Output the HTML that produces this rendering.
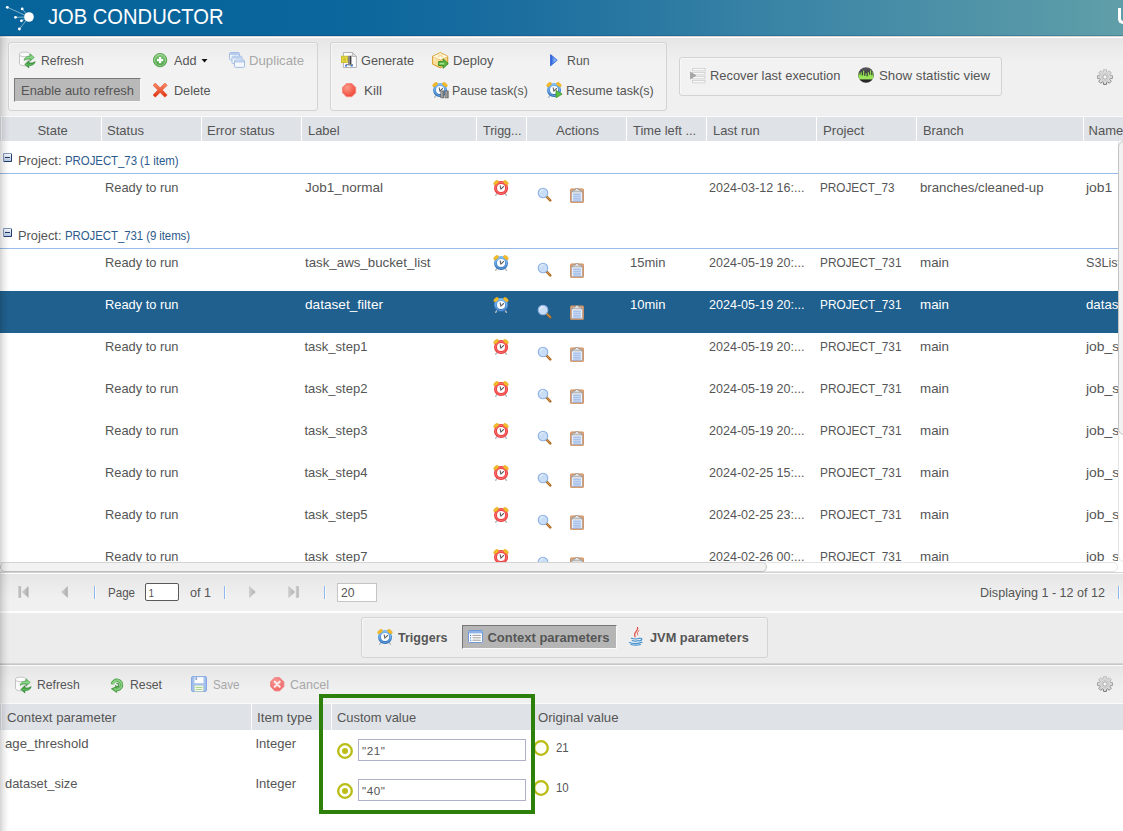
<!DOCTYPE html>
<html>
<head>
<meta charset="utf-8">
<title>Job Conductor</title>
<style>
html,body{margin:0;padding:0;}
body{width:1123px;height:831px;overflow:hidden;position:relative;background:#efefef;font-family:"Liberation Sans",sans-serif;font-size:13px;color:#555;}
.abs{position:absolute;}
.t{position:absolute;white-space:nowrap;line-height:16px;transform-origin:0 50%;}
#hdr{left:0;top:0;width:1123px;height:36px;background:linear-gradient(90deg,#06649b 0%,#0a669c 30%,#1a6d9f 45%,#3d86a6 72%,#609fa9 100%);}
.grp{position:absolute;border:1px solid #d3d3d3;border-radius:3px;box-sizing:border-box;background:rgba(255,255,255,0.15);box-shadow:inset 1px 1px 0 rgba(255,255,255,0.55);}
.hd{position:absolute;height:24px;background:#dfe2e7;box-sizing:border-box;border-left:1px solid #fff;}
.blue{color:#2c5a8c;}
.w{color:#fff;}
.g{color:#a8a8a8;}
.b{font-weight:bold;}
input{font-family:"Liberation Sans",sans-serif;}
</style>
</head>
<body>
<div id="hdr" class="abs">
<svg class="abs" style="left:0;top:0" width="44" height="36" viewBox="0 0 44 36">
<g stroke="#cfe0ec" stroke-width="0.6" fill="none"><line x1="7.3" y1="7.3" x2="29" y2="17"/><line x1="22.2" y1="8.9" x2="29" y2="17"/><line x1="15.500" y1="17.300" x2="29" y2="17"/><line x1="21.400" y1="20.800" x2="29" y2="17"/><line x1="19.400" y1="29" x2="29" y2="17"/></g>
<g fill="#fff"><circle cx="29" cy="17" r="4.800"/><circle cx="7.300" cy="7.300" r="1.400"/><circle cx="22.200" cy="8.900" r="1.400"/><circle cx="15.500" cy="17.300" r="1.400"/><circle cx="21.400" cy="20.800" r="1.400"/><circle cx="19.400" cy="29" r="1.400"/></g></svg>
<div class="t" style="left:47.5px;top:4px;font-size:22.5px;line-height:26px;color:#fff;transform:scaleX(0.8961);">JOB CONDUCTOR</div>
<div class="abs" style="left:1118.300px;top:8px;width:14px;height:16px;box-sizing:border-box;border-left:3px solid #fff;border-bottom:3.200px solid #fff;border-bottom-left-radius:5px"></div>
<div class="abs" style="left:0;top:35px;width:1123px;height:1px;background:rgba(0,40,100,0.2)"></div>
</div>
<div class="abs" style="left:0;top:38px;width:1123px;height:78px;background:linear-gradient(#e6e6e6,#f0f0f0 24px)"></div>
<div class="abs" style="left:0;top:36px;width:1123px;height:1px;background:#d9d7d5"></div>
<div class="abs" style="left:0;top:37px;width:1123px;height:1px;background:#fff"></div>
<div class="grp" style="left:8px;top:42px;width:310px;height:69px"></div>
<div class="grp" style="left:330px;top:42px;width:337px;height:69px"></div>
<div class="grp" style="left:679px;top:57px;width:323px;height:39px"></div>
<div class="abs" style="left:14px;top:78px;width:126.500px;height:23.500px;box-sizing:border-box;background:#b9b9b9;border:1px solid #7a7a7a;border-right-color:#f6f6f6;border-bottom-color:#f6f6f6"></div>
<svg class="abs" style="left:19px;top:51px" width="17" height="18" viewBox="0 0 17 18"><defs><linearGradient id="cy19051" x1="0" x2="1"><stop offset="0" stop-color="#ffffff"/><stop offset="0.5" stop-color="#f4f4f4"/><stop offset="1" stop-color="#cfcfcf"/></linearGradient><linearGradient id="ga19051" x1="0" y1="0" x2="0" y2="1"><stop offset="0" stop-color="#4cad4c"/><stop offset="0.5" stop-color="#8fd88f"/><stop offset="1" stop-color="#3f9f3f"/></linearGradient><linearGradient id="gb19051" x1="0" y1="0" x2="0" y2="1"><stop offset="0" stop-color="#1f7d1f"/><stop offset="0.55" stop-color="#5cb85c"/><stop offset="1" stop-color="#1f7a1f"/></linearGradient></defs><path d="M.5 3.400v9c0 1.400 2.300 2.400 5.200 2.400s5.200-1 5.200-2.400v-9z" fill="url(#cy19051)" stroke="#bdbdbd" stroke-width="0.900"/><ellipse cx="5.700" cy="3.400" rx="5.200" ry="2.300" fill="#fcfcfc" stroke="#bdbdbd" stroke-width="0.900"/><path d="M5 9.400C5.400 6.600 8 5.100 11 5.100V2.800l4.400 3.600L11 10V7.900c-2.200 0-4.200.3-6 1.500z" fill="url(#ga19051)" stroke="#3f9a3f" stroke-width="0.500" stroke-linejoin="round"/><path d="M16.200 10.500c-.5 2.900-3 4.200-6.300 4.200V17l-4.200-3.600 4.200-3.600v2.200c2.400 0 4.700-.2 6.300-1.500z" fill="url(#gb19051)" stroke="#2a7f2a" stroke-width="0.500" stroke-linejoin="round"/></svg>
<div class="t" style="left:41px;top:53px;transform:scaleX(0.9378);">Refresh</div>
<div class="t" style="left:21px;top:83px;transform:scaleX(0.9959);">Enable auto refresh</div>
<svg class="abs" style="left:152.9px;top:52.9px" width="15" height="15" viewBox="0 0 15 15"><defs><linearGradient id="adg" x1="0" y1="0" x2="0" y2="1"><stop offset="0" stop-color="#86cc7c"/><stop offset="1" stop-color="#459c3e"/></linearGradient></defs><circle cx="7.100" cy="7.100" r="6.700" fill="url(#adg)" stroke="#4a9a42" stroke-width="0.800"/><circle cx="7.100" cy="7.100" r="5.500" fill="none" stroke="#c5e8bf" stroke-width="0.600"/><path d="M7.100 4v6.200M4 7.100h6.200" stroke="#fff" stroke-width="2.300"/></svg>
<div class="t" style="left:173.5px;top:53px;transform:scaleX(0.9723);">Add</div>
<svg class="abs" style="left:201px;top:58px" width="8" height="6" viewBox="0 0 8 6"><path d="M.5 1h6l-3 3.500z" fill="#111"/></svg>
<svg class="abs" style="left:152.9px;top:82.8px" width="15" height="15" viewBox="0 0 15 15"><defs><linearGradient id="dlg" x1="0" y1="0" x2="0" y2="1"><stop offset="0" stop-color="#fb8d6c"/><stop offset="1" stop-color="#df2f0e"/></linearGradient></defs><path d="M2.300 0L7.100 4.800 11.900 0l2.300 2.300L9.400 7.100l4.800 4.800-2.300 2.300L7.100 9.400 2.300 14.200 0 11.900 4.800 7.100 0 2.300z" fill="url(#dlg)" stroke="#e2431f" stroke-width="0.500" stroke-linejoin="round"/></svg>
<div class="t" style="left:173.5px;top:83px;transform:scaleX(0.9713);">Delete</div>
<svg class="abs" style="left:229px;top:52px" width="17" height="17" viewBox="0 0 17 17"><rect x="0.5" y="0.5" width="10" height="7.400" rx="1" fill="#f5f8fd" stroke="#a3bce3" stroke-width="1"/><rect x="1.0" y="1.0" width="9" height="2" fill="#b9cdee"/><rect x="3" y="4.2" width="10" height="7.400" rx="1" fill="#f5f8fd" stroke="#a3bce3" stroke-width="1"/><rect x="3.5" y="4.7" width="9" height="2" fill="#b9cdee"/><rect x="5.5" y="8" width="10" height="7.400" rx="1" fill="#f5f8fd" stroke="#a3bce3" stroke-width="1"/><rect x="6.0" y="8.5" width="9" height="2" fill="#b9cdee"/></svg>
<div class="t g" style="left:249px;top:53px;transform:scaleX(1.0147);">Duplicate</div>
<svg class="abs" style="left:341px;top:52px" width="17" height="16" viewBox="0 0 17 16"><path d="M2.400 .5h9l4 4v11h-13z" fill="#fcfcfc" stroke="#adadad" stroke-width="0.900"/><path d="M11.400 .5v4h4z" fill="#e4e4e4" stroke="#adadad" stroke-width="0.800" stroke-linejoin="round"/><rect x="7" y="3.800" width="3.200" height="9.600" fill="#8a8a8a"/><rect x="9.100" y="3.800" width="1.200" height="9.600" fill="#3a3a3a"/><rect x="4.600" y="12" width="7.400" height="1.100" fill="#8a8a8a"/><rect x="4" y="13" width="2" height="1.600" fill="#3f7fe8"/><rect x="9.800" y="13" width="2" height="1.600" fill="#3f7fe8"/><rect x="0.400" y="4.200" width="6" height="6.300" fill="#ece04a" stroke="#c2b21e" stroke-width="0.800"/><path d="M1.800 6h3.300M1.800 7.400h3.300M1.800 8.800h3.300" stroke="#bdae22" stroke-width="0.700"/></svg>
<div class="t" style="left:361px;top:53px;transform:scaleX(0.9778);">Generate</div>
<svg class="abs" style="left:341.9px;top:82.9px" width="15" height="15" viewBox="0 0 15 15"><defs><radialGradient id="kg" cx="0.350" cy="0.300" r="0.850"><stop offset="0" stop-color="#fc9a88"/><stop offset="1" stop-color="#ee3a2c"/></radialGradient></defs><path d="M4.400 .5h5.400l3.900 3.900v5.400l-3.900 3.900h-5.400l-3.900-3.900v-5.400z" fill="url(#kg)" stroke="#f58878" stroke-width="0.900"/></svg>
<div class="t" style="left:364px;top:83px;transform:scaleX(1.0378);">Kill</div>
<svg class="abs" style="left:431.5px;top:51.5px" width="17" height="17" viewBox="0 0 17 17"><defs><linearGradient id="dpl" x1="0" y1="0" x2="1" y2="1"><stop offset="0" stop-color="#fff0c4"/><stop offset="1" stop-color="#f7c767"/></linearGradient></defs><path d="M8.300 .6l7.400 3.700v7.800l-7.400 3.800-7.700-3.800v-7.800z" fill="url(#dpl)" stroke="#d69d2e" stroke-width="1" stroke-linejoin="round"/><path d="M.8 4.400l7.500 3.500 7.300-3.500M8.300 7.900v7.800" fill="none" stroke="#dfa940" stroke-width="0.800"/><path d="M8.300 .9l-7.300 3.500 7.300 3.400 7.200-3.400z" fill="#fff6dc"/><path d="M5.600 2.200l5.400 2.800M11 2.200l-5.400 2.800" stroke="#ecc46e" stroke-width="0.600"/><path d="M6.600 9.600h4.600v-2.700l5 4.700-5 4.700v-2.700h-4.600z" fill="#5db548" stroke="#2c8a1c" stroke-width="0.900" stroke-linejoin="round"/><path d="M7.500 11.600h4.600" fill="none" stroke="#a6e090" stroke-width="1.600"/></svg>
<div class="t" style="left:453.4px;top:53px;transform:scaleX(1.0032);">Deploy</div>
<svg class="abs" style="left:431.5px;top:81.5px" width="17" height="17" viewBox="0 0 17 17"><defs><linearGradient id="blr" x1="0" y1="0" x2="0" y2="1"><stop offset="0" stop-color="#72b4f0"/><stop offset="0.5" stop-color="#4a90d8"/><stop offset="1" stop-color="#2d6db6"/></linearGradient></defs><g stroke="#b4bcc0" stroke-width="1.500" stroke-linecap="round"><line x1="3.800" y1="13.600" x2="2.700" y2="15.300"/></g><circle cx="8.050" cy="8" r="5.550" fill="#fff" stroke="url(#blr)" stroke-width="3"/><circle cx="8.050" cy="8" r="5.500" fill="none" stroke="#9cc6f2" stroke-width="0.700" opacity="0.800"/><g fill="#f3bb2a" stroke="#e2a514" stroke-width="0.400"><ellipse cx="3.100" cy="2.600" rx="2.800" ry="1.600" transform="rotate(-40 3.100 2.600)"/><ellipse cx="12.900" cy="2.600" rx="2.800" ry="1.600" transform="rotate(40 12.900 2.600)"/></g><path d="M7.200 5.800L7.800 9.200 10.600 6.500" fill="none" stroke="#5e5e5e" stroke-width="1.050" stroke-linecap="round" stroke-linejoin="round"/><defs><linearGradient id="pbg" x1="0" x2="1"><stop offset="0" stop-color="#b8b8b8"/><stop offset="1" stop-color="#7a7a7a"/></linearGradient></defs><rect x="8.800" y="8.900" width="3.100" height="7" fill="url(#pbg)" stroke="#585858" stroke-width="0.600"/><rect x="13.100" y="8.900" width="3.100" height="7" fill="url(#pbg)" stroke="#585858" stroke-width="0.600"/></svg>
<div class="t" style="left:452px;top:83px;transform:scaleX(0.9536);">Pause task(s)</div>
<svg class="abs" style="left:549.5px;top:53.5px" width="8" height="13" viewBox="0 0 8 13"><defs><linearGradient id="rg" x1="0" x2="1"><stop offset="0" stop-color="#2252d8"/><stop offset="0.6" stop-color="#7fb0f2"/><stop offset="1" stop-color="#a9cdf8"/></linearGradient></defs><path d="M.6 .6l6.600 5.600-6.600 5.600z" fill="url(#rg)" stroke="#2356d8" stroke-width="0.8" stroke-linejoin="round"/></svg>
<div class="t" style="left:567px;top:53px;transform:scaleX(0.9472);">Run</div>
<svg class="abs" style="left:545.5px;top:81.5px" width="17" height="17" viewBox="0 0 17 17"><defs><linearGradient id="blr" x1="0" y1="0" x2="0" y2="1"><stop offset="0" stop-color="#72b4f0"/><stop offset="0.5" stop-color="#4a90d8"/><stop offset="1" stop-color="#2d6db6"/></linearGradient></defs><g stroke="#b4bcc0" stroke-width="1.500" stroke-linecap="round"><line x1="3.800" y1="13.600" x2="2.700" y2="15.300"/></g><circle cx="8.050" cy="8" r="5.550" fill="#fff" stroke="url(#blr)" stroke-width="3"/><circle cx="8.050" cy="8" r="5.500" fill="none" stroke="#9cc6f2" stroke-width="0.700" opacity="0.800"/><g fill="#f3bb2a" stroke="#e2a514" stroke-width="0.400"><ellipse cx="3.100" cy="2.600" rx="2.800" ry="1.600" transform="rotate(-40 3.100 2.600)"/><ellipse cx="12.900" cy="2.600" rx="2.800" ry="1.600" transform="rotate(40 12.900 2.600)"/></g><path d="M7.200 5.800L7.800 9.200 10.600 6.500" fill="none" stroke="#5e5e5e" stroke-width="1.050" stroke-linecap="round" stroke-linejoin="round"/><path d="M10 8.400l6.200 3.700-6.200 3.700z" fill="#5cbf45" stroke="#3d962d" stroke-width="0.8" stroke-linejoin="round"/></svg>
<div class="t" style="left:566px;top:83px;transform:scaleX(0.9645);">Resume task(s)</div>
<svg class="abs" style="left:690px;top:68px" width="16" height="16" viewBox="0 0 16 16"><rect x="2.600" y="0.4" width="12.400" height="2.400" fill="#fafafa" stroke="#cdcdcd" stroke-width="0.8"/><rect x="2.600" y="4.4" width="12.400" height="2.400" fill="#fafafa" stroke="#cdcdcd" stroke-width="0.8"/><rect x="2.600" y="8.4" width="12.400" height="2.400" fill="#fafafa" stroke="#cdcdcd" stroke-width="0.8"/><rect x="2.600" y="12.4" width="12.400" height="2.400" fill="#fafafa" stroke="#cdcdcd" stroke-width="0.8"/><path d="M.3 4l5.600 3.500-5.600 3.500z" fill="#a6a6a6" stroke="#8e8e8e" stroke-width="0.5"/></svg>
<div class="t" style="left:710px;top:68px;transform:scaleX(0.9915);">Recover last execution</div>
<svg class="abs" style="left:858px;top:67px" width="16" height="16" viewBox="0 0 16 16"><defs><clipPath id="sc"><circle cx="8" cy="8" r="7.600"/></clipPath><linearGradient id="sg" x1="0" y1="0" x2="0" y2="1"><stop offset="0" stop-color="#5a5a5e"/><stop offset="0.500" stop-color="#38383c"/><stop offset="1" stop-color="#222"/></linearGradient></defs><circle cx="8" cy="8" r="7.800" fill="url(#sg)"/><g clip-path="url(#sc)"><path d="M0 12.200V5.600h1.400v2h1.200v-2.400h1.200v3h1.200v-4.400h1.200v5h1.200v-2.600h1.200v3.600h1.200v-4.600h1.200v2.400h1v-4.400h1.200v4.800h1.200v-3h1.400v7.200z" fill="#8edb4e"/><rect x="0" y="9.400" width="16" height="2.800" fill="#9be45a"/></g></svg>
<div class="t" style="left:878.5px;top:68px;transform:scaleX(1.0175);">Show statistic view</div>
<svg class="abs" style="left:1097px;top:69px" width="16" height="16" viewBox="0 0 16 16"><defs><linearGradient id="grs" x1="0" y1="0" x2="0" y2="1"><stop offset="0" stop-color="#c2c2c2"/><stop offset="1" stop-color="#6e6e6e"/></linearGradient></defs><path d="M6.37 2.75L6.56 0.54L9.44 0.54L9.63 2.75L10.57 3.14L12.26 1.71L14.29 3.74L12.86 5.43L13.25 6.37L15.46 6.56L15.46 9.44L13.25 9.63L12.86 10.57L14.29 12.26L12.26 14.29L10.57 12.86L9.63 13.25L9.44 15.46L6.56 15.46L6.37 13.25L5.43 12.86L3.74 14.29L1.71 12.26L3.14 10.57L2.75 9.63L0.54 9.44L0.54 6.56L2.75 6.37L3.14 5.43L1.71 3.74L3.74 1.71L5.43 3.14z" fill="#d9d9d9" stroke="url(#grs)" stroke-width="0.900" stroke-linejoin="round"/><circle cx="8" cy="8" r="3.600" fill="none" stroke="#c4c4c4" stroke-width="0.700"/><circle cx="8" cy="8" r="2.100" fill="#f7f7f7" stroke="#a2a2a2" stroke-width="0.800"/></svg>
<div class="abs" style="left:0;top:116px;width:1123px;height:1px;background:#fafafa"></div>
<div class="abs" style="left:0;top:117px;width:2px;height:24px;background:#dfe2e7"></div>
<div class="hd" style="left:1px;top:117px;width:100px"></div>
<div class="t" style="left:37.4px;top:122.5px;">State</div>
<div class="hd" style="left:101px;top:117px;width:100px"></div>
<div class="t" style="left:107px;top:122.5px;transform:scaleX(1.0038);">Status</div>
<div class="hd" style="left:201px;top:117px;width:100px"></div>
<div class="t" style="left:207px;top:122.5px;transform:scaleX(1.0047);">Error status</div>
<div class="hd" style="left:301px;top:117px;width:175px"></div>
<div class="t" style="left:307.5px;top:122.5px;transform:scaleX(0.9902);">Label</div>
<div class="hd" style="left:476px;top:117px;width:50px"></div>
<div class="t" style="left:482.5px;top:122.5px;transform:scaleX(0.9629);">Trigg...</div>
<div class="hd" style="left:526px;top:117px;width:100px"></div>
<div class="t" style="left:556px;top:122.5px;transform:scaleX(1.0084);">Actions</div>
<div class="hd" style="left:626px;top:117px;width:80px"></div>
<div class="t" style="left:632.8px;top:122.5px;transform:scaleX(0.9904);">Time left ...</div>
<div class="hd" style="left:706px;top:117px;width:110px"></div>
<div class="t" style="left:713px;top:122.5px;transform:scaleX(0.9939);">Last run</div>
<div class="hd" style="left:816px;top:117px;width:100px"></div>
<div class="t" style="left:822.8px;top:122.5px;transform:scaleX(1.0156);">Project</div>
<div class="hd" style="left:916px;top:117px;width:167px"></div>
<div class="t" style="left:923px;top:122.5px;transform:scaleX(0.9878);">Branch</div>
<div class="hd" style="left:1083px;top:117px;width:60px"></div>
<div class="t" style="left:1088.6px;top:122.5px;">Name</div>
<div class="abs" style="left:0;top:141px;width:1123px;height:421px;background:#fff"></div>
<div class="abs" style="left:3px;top:153px;width:9px;height:9px;box-sizing:border-box;border:1px solid #1f3d6e;border-top-color:#7f96bd;border-left-color:#7f96bd;background:linear-gradient(#f6f8fc,#b7c7e1);border-radius:1.500px"></div>
<div class="abs" style="left:5px;top:157px;width:5px;height:1px;background:#1d3a6b"></div>
<div class="t" style="left:17.5px;top:153px;transform:scaleX(0.9869);">Project:</div>
<div class="t blue" style="left:65px;top:153px;letter-spacing:-0.056px;transform:scaleX(0.8800);">PROJECT_73 (1 item)</div>
<div class="abs" style="left:0;top:173px;width:1118px;height:1px;background:#99bbe8"></div>
<div class="abs" style="left:3px;top:228px;width:9px;height:9px;box-sizing:border-box;border:1px solid #1f3d6e;border-top-color:#7f96bd;border-left-color:#7f96bd;background:linear-gradient(#f6f8fc,#b7c7e1);border-radius:1.500px"></div>
<div class="abs" style="left:5px;top:232px;width:5px;height:1px;background:#1d3a6b"></div>
<div class="t" style="left:17.5px;top:228px;transform:scaleX(0.9869);">Project:</div>
<div class="t blue" style="left:65px;top:228px;letter-spacing:-0.082px;transform:scaleX(0.8800);">PROJECT_731 (9 items)</div>
<div class="abs" style="left:0;top:248px;width:1118px;height:1px;background:#99bbe8"></div>
<div class="abs" style="left:0;top:141px;width:1118px;height:421px;overflow:hidden">
<div class="t" style="left:105px;top:39px;transform:scaleX(0.9874);">Ready to run</div>
<div class="t" style="left:304.5px;top:39px;transform:scaleX(1.0378);">Job1_normal</div>
<svg class="abs" style="left:493px;top:39px" width="16" height="17" viewBox="0 0 16 17"><g stroke="#b4bcc0" stroke-width="1.500" stroke-linecap="round"><line x1="3.800" y1="13.600" x2="2.700" y2="15.300"/><line x1="12.300" y1="13.600" x2="13.400" y2="15.300"/></g><circle cx="8.050" cy="8" r="5.550" fill="#fff" stroke="#f03a3a" stroke-width="3"/><circle cx="8.050" cy="8" r="5.500" fill="none" stroke="#f8a6a6" stroke-width="0.700" opacity="0.800"/><g fill="#f3bb2a" stroke="#e2a514" stroke-width="0.400"><ellipse cx="3.100" cy="2.600" rx="2.800" ry="1.600" transform="rotate(-40 3.100 2.600)"/><ellipse cx="12.900" cy="2.600" rx="2.800" ry="1.600" transform="rotate(40 12.900 2.600)"/></g><path d="M7.200 5.800L7.800 9.200 10.600 6.500" fill="none" stroke="#5e5e5e" stroke-width="1.050" stroke-linecap="round" stroke-linejoin="round"/></svg>
<svg class="abs" style="left:537.4px;top:45.6px" width="16" height="16" viewBox="0 0 16 16"><line x1="9.400" y1="9.400" x2="13.300" y2="13.300" stroke="#a8651c" stroke-width="2.500" stroke-linecap="round"/><line x1="9.800" y1="9.600" x2="13.200" y2="13" stroke="#e6b06a" stroke-width="0.900" stroke-linecap="round"/><circle cx="6" cy="6" r="4.800" fill="#c9def6" stroke="#8db1e2" stroke-width="1.100"/><path d="M3 5.400a3.200 3.200 0 0 1 3.200-2.800" fill="none" stroke="#eef5fd" stroke-width="1"/></svg>
<svg class="abs" style="left:570px;top:47px" width="14" height="15" viewBox="0 0 14 15"><rect x="0.500" y="0.900" width="13" height="13.700" rx="0.800" fill="#e3a877" stroke="#d08f5c" stroke-width="0.900"/><rect x="1.900" y="3" width="10.200" height="10.400" fill="#fff" stroke="#6b96d6" stroke-width="0.500"/><g stroke="#4d80d2" stroke-width="0.800"><line x1="3.100" y1="6.100" x2="10.900" y2="6.100"/><line x1="3.100" y1="8.100" x2="10.900" y2="8.100"/><line x1="3.100" y1="10.100" x2="10.900" y2="10.100"/><line x1="3.100" y1="12" x2="10.900" y2="12"/></g><path d="M2 3.900c0-1.500 1.600-1.900 3.200-1.900l.5-1.300h2.600l.5 1.300c1.600 0 3.200.4 3.200 1.900z" fill="#dcdcdc" stroke="#8c8c8c" stroke-width="0.700"/><circle cx="7" cy="1.500" r="0.600" fill="#fff"/></svg>
<div class="t" style="left:709px;top:39px;transform:scaleX(0.9643);">2024-03-12 16:...</div>
<div class="t" style="left:819.5px;top:39px;transform:scaleX(0.9044);">PROJECT_73</div>
<div class="t" style="left:919.5px;top:39px;transform:scaleX(1.0171);">branches/cleaned-up</div>
<div class="t" style="left:1086px;top:39px;transform:scaleX(1.07);">job1</div>
<div class="t" style="left:105px;top:114px;transform:scaleX(0.9874);">Ready to run</div>
<div class="t" style="left:304.5px;top:114px;transform:scaleX(1.0216);">task_aws_bucket_list</div>
<svg class="abs" style="left:493px;top:114px" width="16" height="17" viewBox="0 0 16 17"><defs><linearGradient id="blr" x1="0" y1="0" x2="0" y2="1"><stop offset="0" stop-color="#72b4f0"/><stop offset="0.5" stop-color="#4a90d8"/><stop offset="1" stop-color="#2d6db6"/></linearGradient></defs><g stroke="#b4bcc0" stroke-width="1.500" stroke-linecap="round"><line x1="3.800" y1="13.600" x2="2.700" y2="15.300"/><line x1="12.300" y1="13.600" x2="13.400" y2="15.300"/></g><circle cx="8.050" cy="8" r="5.550" fill="#fff" stroke="url(#blr)" stroke-width="3"/><circle cx="8.050" cy="8" r="5.500" fill="none" stroke="#9cc6f2" stroke-width="0.700" opacity="0.800"/><g fill="#f3bb2a" stroke="#e2a514" stroke-width="0.400"><ellipse cx="3.100" cy="2.600" rx="2.800" ry="1.600" transform="rotate(-40 3.100 2.600)"/><ellipse cx="12.900" cy="2.600" rx="2.800" ry="1.600" transform="rotate(40 12.900 2.600)"/></g><path d="M7.200 5.800L7.800 9.200 10.600 6.500" fill="none" stroke="#5e5e5e" stroke-width="1.050" stroke-linecap="round" stroke-linejoin="round"/></svg>
<svg class="abs" style="left:537.4px;top:120.6px" width="16" height="16" viewBox="0 0 16 16"><line x1="9.400" y1="9.400" x2="13.300" y2="13.300" stroke="#a8651c" stroke-width="2.500" stroke-linecap="round"/><line x1="9.800" y1="9.600" x2="13.200" y2="13" stroke="#e6b06a" stroke-width="0.900" stroke-linecap="round"/><circle cx="6" cy="6" r="4.800" fill="#c9def6" stroke="#8db1e2" stroke-width="1.100"/><path d="M3 5.400a3.200 3.200 0 0 1 3.200-2.800" fill="none" stroke="#eef5fd" stroke-width="1"/></svg>
<svg class="abs" style="left:570px;top:122px" width="14" height="15" viewBox="0 0 14 15"><rect x="0.500" y="0.900" width="13" height="13.700" rx="0.800" fill="#e3a877" stroke="#d08f5c" stroke-width="0.900"/><rect x="1.900" y="3" width="10.200" height="10.400" fill="#fff" stroke="#6b96d6" stroke-width="0.500"/><g stroke="#4d80d2" stroke-width="0.800"><line x1="3.100" y1="6.100" x2="10.900" y2="6.100"/><line x1="3.100" y1="8.100" x2="10.900" y2="8.100"/><line x1="3.100" y1="10.100" x2="10.900" y2="10.100"/><line x1="3.100" y1="12" x2="10.900" y2="12"/></g><path d="M2 3.900c0-1.500 1.600-1.900 3.200-1.900l.5-1.300h2.600l.5 1.300c1.600 0 3.200.4 3.200 1.900z" fill="#dcdcdc" stroke="#8c8c8c" stroke-width="0.700"/><circle cx="7" cy="1.500" r="0.600" fill="#fff"/></svg>
<div class="t" style="left:630px;top:114px;">15min</div>
<div class="t" style="left:709px;top:114px;transform:scaleX(0.9643);">2024-05-19 20:...</div>
<div class="t" style="left:819.5px;top:114px;transform:scaleX(0.9097);">PROJECT_731</div>
<div class="t" style="left:919.5px;top:114px;transform:scaleX(1.0288);">main</div>
<div class="t" style="left:1086px;top:114px;transform:scaleX(0.97);">S3List</div>
<div class="abs" style="left:0;top:150px;width:1118px;height:42px;background:#20608f"></div>
<div class="t w" style="left:105px;top:156px;transform:scaleX(0.9874);">Ready to run</div>
<div class="t w" style="left:304.5px;top:156px;transform:scaleX(1.0479);">dataset_filter</div>
<svg class="abs" style="left:493px;top:156px" width="16" height="17" viewBox="0 0 16 17"><defs><linearGradient id="blr" x1="0" y1="0" x2="0" y2="1"><stop offset="0" stop-color="#72b4f0"/><stop offset="0.5" stop-color="#4a90d8"/><stop offset="1" stop-color="#2d6db6"/></linearGradient></defs><g stroke="#b4bcc0" stroke-width="1.500" stroke-linecap="round"><line x1="3.800" y1="13.600" x2="2.700" y2="15.300"/><line x1="12.300" y1="13.600" x2="13.400" y2="15.300"/></g><circle cx="8.050" cy="8" r="5.550" fill="#fff" stroke="url(#blr)" stroke-width="3"/><circle cx="8.050" cy="8" r="5.500" fill="none" stroke="#9cc6f2" stroke-width="0.700" opacity="0.800"/><g fill="#f3bb2a" stroke="#e2a514" stroke-width="0.400"><ellipse cx="3.100" cy="2.600" rx="2.800" ry="1.600" transform="rotate(-40 3.100 2.600)"/><ellipse cx="12.900" cy="2.600" rx="2.800" ry="1.600" transform="rotate(40 12.900 2.600)"/></g><path d="M7.200 5.800L7.800 9.200 10.600 6.500" fill="none" stroke="#5e5e5e" stroke-width="1.050" stroke-linecap="round" stroke-linejoin="round"/></svg>
<svg class="abs" style="left:537.4px;top:162.6px" width="16" height="16" viewBox="0 0 16 16"><line x1="9.400" y1="9.400" x2="13.300" y2="13.300" stroke="#a8651c" stroke-width="2.500" stroke-linecap="round"/><line x1="9.800" y1="9.600" x2="13.200" y2="13" stroke="#e6b06a" stroke-width="0.900" stroke-linecap="round"/><circle cx="6" cy="6" r="4.800" fill="#c9def6" stroke="#8db1e2" stroke-width="1.100"/><path d="M3 5.400a3.200 3.200 0 0 1 3.200-2.800" fill="none" stroke="#eef5fd" stroke-width="1"/></svg>
<svg class="abs" style="left:570px;top:164px" width="14" height="15" viewBox="0 0 14 15"><rect x="0.500" y="0.900" width="13" height="13.700" rx="0.800" fill="#e3a877" stroke="#d08f5c" stroke-width="0.900"/><rect x="1.900" y="3" width="10.200" height="10.400" fill="#fff" stroke="#6b96d6" stroke-width="0.500"/><g stroke="#4d80d2" stroke-width="0.800"><line x1="3.100" y1="6.100" x2="10.900" y2="6.100"/><line x1="3.100" y1="8.100" x2="10.900" y2="8.100"/><line x1="3.100" y1="10.100" x2="10.900" y2="10.100"/><line x1="3.100" y1="12" x2="10.900" y2="12"/></g><path d="M2 3.900c0-1.500 1.600-1.900 3.200-1.900l.5-1.300h2.600l.5 1.300c1.600 0 3.200.4 3.200 1.900z" fill="#dcdcdc" stroke="#8c8c8c" stroke-width="0.700"/><circle cx="7" cy="1.500" r="0.600" fill="#fff"/></svg>
<div class="t w" style="left:630px;top:156px;">10min</div>
<div class="t w" style="left:709px;top:156px;transform:scaleX(0.9643);">2024-05-19 20:...</div>
<div class="t w" style="left:819.5px;top:156px;transform:scaleX(0.9097);">PROJECT_731</div>
<div class="t w" style="left:919.5px;top:156px;transform:scaleX(1.0288);">main</div>
<div class="t w" style="left:1086px;top:156px;transform:scaleX(1.02);">dataset_</div>
<div class="t" style="left:105px;top:198px;transform:scaleX(0.9874);">Ready to run</div>
<div class="t" style="left:304.5px;top:198px;">task_step1</div>
<svg class="abs" style="left:493px;top:198px" width="16" height="17" viewBox="0 0 16 17"><g stroke="#b4bcc0" stroke-width="1.500" stroke-linecap="round"><line x1="3.800" y1="13.600" x2="2.700" y2="15.300"/><line x1="12.300" y1="13.600" x2="13.400" y2="15.300"/></g><circle cx="8.050" cy="8" r="5.550" fill="#fff" stroke="#f03a3a" stroke-width="3"/><circle cx="8.050" cy="8" r="5.500" fill="none" stroke="#f8a6a6" stroke-width="0.700" opacity="0.800"/><g fill="#f3bb2a" stroke="#e2a514" stroke-width="0.400"><ellipse cx="3.100" cy="2.600" rx="2.800" ry="1.600" transform="rotate(-40 3.100 2.600)"/><ellipse cx="12.900" cy="2.600" rx="2.800" ry="1.600" transform="rotate(40 12.900 2.600)"/></g><path d="M7.200 5.800L7.800 9.200 10.600 6.500" fill="none" stroke="#5e5e5e" stroke-width="1.050" stroke-linecap="round" stroke-linejoin="round"/></svg>
<svg class="abs" style="left:537.4px;top:204.6px" width="16" height="16" viewBox="0 0 16 16"><line x1="9.400" y1="9.400" x2="13.300" y2="13.300" stroke="#a8651c" stroke-width="2.500" stroke-linecap="round"/><line x1="9.800" y1="9.600" x2="13.200" y2="13" stroke="#e6b06a" stroke-width="0.900" stroke-linecap="round"/><circle cx="6" cy="6" r="4.800" fill="#c9def6" stroke="#8db1e2" stroke-width="1.100"/><path d="M3 5.400a3.200 3.200 0 0 1 3.200-2.800" fill="none" stroke="#eef5fd" stroke-width="1"/></svg>
<svg class="abs" style="left:570px;top:206px" width="14" height="15" viewBox="0 0 14 15"><rect x="0.500" y="0.900" width="13" height="13.700" rx="0.800" fill="#e3a877" stroke="#d08f5c" stroke-width="0.900"/><rect x="1.900" y="3" width="10.200" height="10.400" fill="#fff" stroke="#6b96d6" stroke-width="0.500"/><g stroke="#4d80d2" stroke-width="0.800"><line x1="3.100" y1="6.100" x2="10.900" y2="6.100"/><line x1="3.100" y1="8.100" x2="10.900" y2="8.100"/><line x1="3.100" y1="10.100" x2="10.900" y2="10.100"/><line x1="3.100" y1="12" x2="10.900" y2="12"/></g><path d="M2 3.900c0-1.500 1.600-1.900 3.200-1.900l.5-1.300h2.600l.5 1.300c1.600 0 3.200.4 3.200 1.900z" fill="#dcdcdc" stroke="#8c8c8c" stroke-width="0.700"/><circle cx="7" cy="1.500" r="0.600" fill="#fff"/></svg>
<div class="t" style="left:709px;top:198px;transform:scaleX(0.9643);">2024-05-19 20:...</div>
<div class="t" style="left:819.5px;top:198px;transform:scaleX(0.9097);">PROJECT_731</div>
<div class="t" style="left:919.5px;top:198px;transform:scaleX(1.0288);">main</div>
<div class="t" style="left:1086px;top:198px;transform:scaleX(1.07);">job_step1</div>
<div class="t" style="left:105px;top:240px;transform:scaleX(0.9874);">Ready to run</div>
<div class="t" style="left:304.5px;top:240px;">task_step2</div>
<svg class="abs" style="left:493px;top:240px" width="16" height="17" viewBox="0 0 16 17"><g stroke="#b4bcc0" stroke-width="1.500" stroke-linecap="round"><line x1="3.800" y1="13.600" x2="2.700" y2="15.300"/><line x1="12.300" y1="13.600" x2="13.400" y2="15.300"/></g><circle cx="8.050" cy="8" r="5.550" fill="#fff" stroke="#f03a3a" stroke-width="3"/><circle cx="8.050" cy="8" r="5.500" fill="none" stroke="#f8a6a6" stroke-width="0.700" opacity="0.800"/><g fill="#f3bb2a" stroke="#e2a514" stroke-width="0.400"><ellipse cx="3.100" cy="2.600" rx="2.800" ry="1.600" transform="rotate(-40 3.100 2.600)"/><ellipse cx="12.900" cy="2.600" rx="2.800" ry="1.600" transform="rotate(40 12.900 2.600)"/></g><path d="M7.200 5.800L7.800 9.200 10.600 6.500" fill="none" stroke="#5e5e5e" stroke-width="1.050" stroke-linecap="round" stroke-linejoin="round"/></svg>
<svg class="abs" style="left:537.4px;top:246.6px" width="16" height="16" viewBox="0 0 16 16"><line x1="9.400" y1="9.400" x2="13.300" y2="13.300" stroke="#a8651c" stroke-width="2.500" stroke-linecap="round"/><line x1="9.800" y1="9.600" x2="13.200" y2="13" stroke="#e6b06a" stroke-width="0.900" stroke-linecap="round"/><circle cx="6" cy="6" r="4.800" fill="#c9def6" stroke="#8db1e2" stroke-width="1.100"/><path d="M3 5.400a3.200 3.200 0 0 1 3.200-2.800" fill="none" stroke="#eef5fd" stroke-width="1"/></svg>
<svg class="abs" style="left:570px;top:248px" width="14" height="15" viewBox="0 0 14 15"><rect x="0.500" y="0.900" width="13" height="13.700" rx="0.800" fill="#e3a877" stroke="#d08f5c" stroke-width="0.900"/><rect x="1.900" y="3" width="10.200" height="10.400" fill="#fff" stroke="#6b96d6" stroke-width="0.500"/><g stroke="#4d80d2" stroke-width="0.800"><line x1="3.100" y1="6.100" x2="10.900" y2="6.100"/><line x1="3.100" y1="8.100" x2="10.900" y2="8.100"/><line x1="3.100" y1="10.100" x2="10.900" y2="10.100"/><line x1="3.100" y1="12" x2="10.900" y2="12"/></g><path d="M2 3.900c0-1.500 1.600-1.900 3.200-1.900l.5-1.300h2.600l.5 1.300c1.600 0 3.200.4 3.200 1.900z" fill="#dcdcdc" stroke="#8c8c8c" stroke-width="0.700"/><circle cx="7" cy="1.500" r="0.600" fill="#fff"/></svg>
<div class="t" style="left:709px;top:240px;transform:scaleX(0.9643);">2024-05-19 20:...</div>
<div class="t" style="left:819.5px;top:240px;transform:scaleX(0.9097);">PROJECT_731</div>
<div class="t" style="left:919.5px;top:240px;transform:scaleX(1.0288);">main</div>
<div class="t" style="left:1086px;top:240px;transform:scaleX(1.07);">job_step2</div>
<div class="t" style="left:105px;top:282px;transform:scaleX(0.9874);">Ready to run</div>
<div class="t" style="left:304.5px;top:282px;">task_step3</div>
<svg class="abs" style="left:493px;top:282px" width="16" height="17" viewBox="0 0 16 17"><g stroke="#b4bcc0" stroke-width="1.500" stroke-linecap="round"><line x1="3.800" y1="13.600" x2="2.700" y2="15.300"/><line x1="12.300" y1="13.600" x2="13.400" y2="15.300"/></g><circle cx="8.050" cy="8" r="5.550" fill="#fff" stroke="#f03a3a" stroke-width="3"/><circle cx="8.050" cy="8" r="5.500" fill="none" stroke="#f8a6a6" stroke-width="0.700" opacity="0.800"/><g fill="#f3bb2a" stroke="#e2a514" stroke-width="0.400"><ellipse cx="3.100" cy="2.600" rx="2.800" ry="1.600" transform="rotate(-40 3.100 2.600)"/><ellipse cx="12.900" cy="2.600" rx="2.800" ry="1.600" transform="rotate(40 12.900 2.600)"/></g><path d="M7.200 5.800L7.800 9.200 10.600 6.500" fill="none" stroke="#5e5e5e" stroke-width="1.050" stroke-linecap="round" stroke-linejoin="round"/></svg>
<svg class="abs" style="left:537.4px;top:288.6px" width="16" height="16" viewBox="0 0 16 16"><line x1="9.400" y1="9.400" x2="13.300" y2="13.300" stroke="#a8651c" stroke-width="2.500" stroke-linecap="round"/><line x1="9.800" y1="9.600" x2="13.200" y2="13" stroke="#e6b06a" stroke-width="0.900" stroke-linecap="round"/><circle cx="6" cy="6" r="4.800" fill="#c9def6" stroke="#8db1e2" stroke-width="1.100"/><path d="M3 5.400a3.200 3.200 0 0 1 3.200-2.800" fill="none" stroke="#eef5fd" stroke-width="1"/></svg>
<svg class="abs" style="left:570px;top:290px" width="14" height="15" viewBox="0 0 14 15"><rect x="0.500" y="0.900" width="13" height="13.700" rx="0.800" fill="#e3a877" stroke="#d08f5c" stroke-width="0.900"/><rect x="1.900" y="3" width="10.200" height="10.400" fill="#fff" stroke="#6b96d6" stroke-width="0.500"/><g stroke="#4d80d2" stroke-width="0.800"><line x1="3.100" y1="6.100" x2="10.900" y2="6.100"/><line x1="3.100" y1="8.100" x2="10.900" y2="8.100"/><line x1="3.100" y1="10.100" x2="10.900" y2="10.100"/><line x1="3.100" y1="12" x2="10.900" y2="12"/></g><path d="M2 3.900c0-1.500 1.600-1.900 3.200-1.900l.5-1.300h2.600l.5 1.300c1.600 0 3.200.4 3.200 1.900z" fill="#dcdcdc" stroke="#8c8c8c" stroke-width="0.700"/><circle cx="7" cy="1.500" r="0.600" fill="#fff"/></svg>
<div class="t" style="left:709px;top:282px;transform:scaleX(0.9643);">2024-05-19 20:...</div>
<div class="t" style="left:819.5px;top:282px;transform:scaleX(0.9097);">PROJECT_731</div>
<div class="t" style="left:919.5px;top:282px;transform:scaleX(1.0288);">main</div>
<div class="t" style="left:1086px;top:282px;transform:scaleX(1.07);">job_step3</div>
<div class="t" style="left:105px;top:324px;transform:scaleX(0.9874);">Ready to run</div>
<div class="t" style="left:304.5px;top:324px;">task_step4</div>
<svg class="abs" style="left:493px;top:324px" width="16" height="17" viewBox="0 0 16 17"><g stroke="#b4bcc0" stroke-width="1.500" stroke-linecap="round"><line x1="3.800" y1="13.600" x2="2.700" y2="15.300"/><line x1="12.300" y1="13.600" x2="13.400" y2="15.300"/></g><circle cx="8.050" cy="8" r="5.550" fill="#fff" stroke="#f03a3a" stroke-width="3"/><circle cx="8.050" cy="8" r="5.500" fill="none" stroke="#f8a6a6" stroke-width="0.700" opacity="0.800"/><g fill="#f3bb2a" stroke="#e2a514" stroke-width="0.400"><ellipse cx="3.100" cy="2.600" rx="2.800" ry="1.600" transform="rotate(-40 3.100 2.600)"/><ellipse cx="12.900" cy="2.600" rx="2.800" ry="1.600" transform="rotate(40 12.900 2.600)"/></g><path d="M7.200 5.800L7.800 9.200 10.600 6.500" fill="none" stroke="#5e5e5e" stroke-width="1.050" stroke-linecap="round" stroke-linejoin="round"/></svg>
<svg class="abs" style="left:537.4px;top:330.6px" width="16" height="16" viewBox="0 0 16 16"><line x1="9.400" y1="9.400" x2="13.300" y2="13.300" stroke="#a8651c" stroke-width="2.500" stroke-linecap="round"/><line x1="9.800" y1="9.600" x2="13.200" y2="13" stroke="#e6b06a" stroke-width="0.900" stroke-linecap="round"/><circle cx="6" cy="6" r="4.800" fill="#c9def6" stroke="#8db1e2" stroke-width="1.100"/><path d="M3 5.400a3.200 3.200 0 0 1 3.200-2.800" fill="none" stroke="#eef5fd" stroke-width="1"/></svg>
<svg class="abs" style="left:570px;top:332px" width="14" height="15" viewBox="0 0 14 15"><rect x="0.500" y="0.900" width="13" height="13.700" rx="0.800" fill="#e3a877" stroke="#d08f5c" stroke-width="0.900"/><rect x="1.900" y="3" width="10.200" height="10.400" fill="#fff" stroke="#6b96d6" stroke-width="0.500"/><g stroke="#4d80d2" stroke-width="0.800"><line x1="3.100" y1="6.100" x2="10.900" y2="6.100"/><line x1="3.100" y1="8.100" x2="10.900" y2="8.100"/><line x1="3.100" y1="10.100" x2="10.900" y2="10.100"/><line x1="3.100" y1="12" x2="10.900" y2="12"/></g><path d="M2 3.900c0-1.500 1.600-1.900 3.200-1.900l.5-1.300h2.600l.5 1.300c1.600 0 3.200.4 3.200 1.900z" fill="#dcdcdc" stroke="#8c8c8c" stroke-width="0.700"/><circle cx="7" cy="1.500" r="0.600" fill="#fff"/></svg>
<div class="t" style="left:709px;top:324px;transform:scaleX(0.9643);">2024-02-25 15:...</div>
<div class="t" style="left:819.5px;top:324px;transform:scaleX(0.9097);">PROJECT_731</div>
<div class="t" style="left:919.5px;top:324px;transform:scaleX(1.0288);">main</div>
<div class="t" style="left:1086px;top:324px;transform:scaleX(1.07);">job_step4</div>
<div class="t" style="left:105px;top:366px;transform:scaleX(0.9874);">Ready to run</div>
<div class="t" style="left:304.5px;top:366px;">task_step5</div>
<svg class="abs" style="left:493px;top:366px" width="16" height="17" viewBox="0 0 16 17"><g stroke="#b4bcc0" stroke-width="1.500" stroke-linecap="round"><line x1="3.800" y1="13.600" x2="2.700" y2="15.300"/><line x1="12.300" y1="13.600" x2="13.400" y2="15.300"/></g><circle cx="8.050" cy="8" r="5.550" fill="#fff" stroke="#f03a3a" stroke-width="3"/><circle cx="8.050" cy="8" r="5.500" fill="none" stroke="#f8a6a6" stroke-width="0.700" opacity="0.800"/><g fill="#f3bb2a" stroke="#e2a514" stroke-width="0.400"><ellipse cx="3.100" cy="2.600" rx="2.800" ry="1.600" transform="rotate(-40 3.100 2.600)"/><ellipse cx="12.900" cy="2.600" rx="2.800" ry="1.600" transform="rotate(40 12.900 2.600)"/></g><path d="M7.200 5.800L7.800 9.200 10.600 6.500" fill="none" stroke="#5e5e5e" stroke-width="1.050" stroke-linecap="round" stroke-linejoin="round"/></svg>
<svg class="abs" style="left:537.4px;top:372.6px" width="16" height="16" viewBox="0 0 16 16"><line x1="9.400" y1="9.400" x2="13.300" y2="13.300" stroke="#a8651c" stroke-width="2.500" stroke-linecap="round"/><line x1="9.800" y1="9.600" x2="13.200" y2="13" stroke="#e6b06a" stroke-width="0.900" stroke-linecap="round"/><circle cx="6" cy="6" r="4.800" fill="#c9def6" stroke="#8db1e2" stroke-width="1.100"/><path d="M3 5.400a3.200 3.200 0 0 1 3.200-2.800" fill="none" stroke="#eef5fd" stroke-width="1"/></svg>
<svg class="abs" style="left:570px;top:374px" width="14" height="15" viewBox="0 0 14 15"><rect x="0.500" y="0.900" width="13" height="13.700" rx="0.800" fill="#e3a877" stroke="#d08f5c" stroke-width="0.900"/><rect x="1.900" y="3" width="10.200" height="10.400" fill="#fff" stroke="#6b96d6" stroke-width="0.500"/><g stroke="#4d80d2" stroke-width="0.800"><line x1="3.100" y1="6.100" x2="10.900" y2="6.100"/><line x1="3.100" y1="8.100" x2="10.900" y2="8.100"/><line x1="3.100" y1="10.100" x2="10.900" y2="10.100"/><line x1="3.100" y1="12" x2="10.900" y2="12"/></g><path d="M2 3.900c0-1.500 1.600-1.900 3.200-1.900l.5-1.300h2.600l.5 1.300c1.600 0 3.200.4 3.200 1.900z" fill="#dcdcdc" stroke="#8c8c8c" stroke-width="0.700"/><circle cx="7" cy="1.500" r="0.600" fill="#fff"/></svg>
<div class="t" style="left:709px;top:366px;transform:scaleX(0.9643);">2024-02-25 23:...</div>
<div class="t" style="left:819.5px;top:366px;transform:scaleX(0.9097);">PROJECT_731</div>
<div class="t" style="left:919.5px;top:366px;transform:scaleX(1.0288);">main</div>
<div class="t" style="left:1086px;top:366px;transform:scaleX(1.07);">job_step5</div>
<div class="t" style="left:105px;top:408px;transform:scaleX(0.9874);">Ready to run</div>
<div class="t" style="left:304.5px;top:408px;">task_step7</div>
<svg class="abs" style="left:493px;top:408px" width="16" height="17" viewBox="0 0 16 17"><g stroke="#b4bcc0" stroke-width="1.500" stroke-linecap="round"><line x1="3.800" y1="13.600" x2="2.700" y2="15.300"/><line x1="12.300" y1="13.600" x2="13.400" y2="15.300"/></g><circle cx="8.050" cy="8" r="5.550" fill="#fff" stroke="#f03a3a" stroke-width="3"/><circle cx="8.050" cy="8" r="5.500" fill="none" stroke="#f8a6a6" stroke-width="0.700" opacity="0.800"/><g fill="#f3bb2a" stroke="#e2a514" stroke-width="0.400"><ellipse cx="3.100" cy="2.600" rx="2.800" ry="1.600" transform="rotate(-40 3.100 2.600)"/><ellipse cx="12.900" cy="2.600" rx="2.800" ry="1.600" transform="rotate(40 12.900 2.600)"/></g><path d="M7.200 5.800L7.800 9.200 10.600 6.500" fill="none" stroke="#5e5e5e" stroke-width="1.050" stroke-linecap="round" stroke-linejoin="round"/></svg>
<svg class="abs" style="left:537.4px;top:414.6px" width="16" height="16" viewBox="0 0 16 16"><line x1="9.400" y1="9.400" x2="13.300" y2="13.300" stroke="#a8651c" stroke-width="2.500" stroke-linecap="round"/><line x1="9.800" y1="9.600" x2="13.200" y2="13" stroke="#e6b06a" stroke-width="0.900" stroke-linecap="round"/><circle cx="6" cy="6" r="4.800" fill="#c9def6" stroke="#8db1e2" stroke-width="1.100"/><path d="M3 5.400a3.200 3.200 0 0 1 3.200-2.800" fill="none" stroke="#eef5fd" stroke-width="1"/></svg>
<svg class="abs" style="left:570px;top:416px" width="14" height="15" viewBox="0 0 14 15"><rect x="0.500" y="0.900" width="13" height="13.700" rx="0.800" fill="#e3a877" stroke="#d08f5c" stroke-width="0.900"/><rect x="1.900" y="3" width="10.200" height="10.400" fill="#fff" stroke="#6b96d6" stroke-width="0.500"/><g stroke="#4d80d2" stroke-width="0.800"><line x1="3.100" y1="6.100" x2="10.900" y2="6.100"/><line x1="3.100" y1="8.100" x2="10.900" y2="8.100"/><line x1="3.100" y1="10.100" x2="10.900" y2="10.100"/><line x1="3.100" y1="12" x2="10.900" y2="12"/></g><path d="M2 3.900c0-1.500 1.600-1.900 3.200-1.900l.5-1.300h2.600l.5 1.300c1.600 0 3.200.4 3.200 1.900z" fill="#dcdcdc" stroke="#8c8c8c" stroke-width="0.700"/><circle cx="7" cy="1.500" r="0.600" fill="#fff"/></svg>
<div class="t" style="left:709px;top:408px;transform:scaleX(0.9643);">2024-02-26 00:...</div>
<div class="t" style="left:819.5px;top:408px;transform:scaleX(0.9097);">PROJECT_731</div>
<div class="t" style="left:919.5px;top:408px;transform:scaleX(1.0288);">main</div>
<div class="t" style="left:1086px;top:408px;transform:scaleX(1.07);">job_step7</div>
</div>
<div class="abs" style="left:1118px;top:141px;width:5px;height:421px;background:#fff"></div>
<div class="abs" style="left:1118px;top:141px;width:5px;height:421px;overflow:hidden"><div class="abs" style="left:0;top:-6px;width:12px;height:427px;box-sizing:border-box;background:#fff;border:1px solid #e4e4e4;border-radius:6px"></div></div>
<div class="abs" style="left:1118px;top:141px;width:12px;height:294px;box-sizing:border-box;border:1px solid #c4c4c4;border-radius:6px;background:#f2f2f2"></div>
<div class="abs" style="left:0;top:562px;width:1123px;height:10px;background:#fff"></div>
<div class="abs" style="left:-6px;top:562px;width:1124px;height:10px;box-sizing:border-box;background:#fff;border:1px solid #e4e4e4;border-radius:5px"></div>
<div class="abs" style="left:0;top:572px;width:1123px;height:1px;background:#d2d2d2"></div>
<div class="abs" style="left:0px;top:562px;width:767px;height:10px;box-sizing:border-box;border:1px solid #c6c6c6;border-top-color:#d4d4d4;border-bottom-color:#bcbcbc;border-radius:5px;background:#f2f2f2"></div>
<div class="abs" style="left:0;top:573px;width:1123px;height:1px;background:#fdfdfd"></div>
<div class="abs" style="left:0;top:574px;width:1123px;height:37px;background:linear-gradient(#e6e6e6,#f0f0f0 24px)"></div>
<div class="abs" style="left:0;top:611px;width:1123px;height:2px;background:#fdfdfd"></div>
<svg class="abs" style="left:18px;top:586px" width="11" height="12" viewBox="0 0 11 12"><defs><linearGradient id="pgg" x1="0" y1="0" x2="1" y2="0"><stop offset="0" stop-color="#d2d2d2"/><stop offset="1" stop-color="#ababab"/></linearGradient></defs><rect x="0.400" y="0.300" width="2.500" height="11.400" fill="url(#pgg)" stroke="#bdbdbd" stroke-width="0.400"/><path d="M10.300 .4v11.200l-6-5.600z" fill="url(#pgg)" stroke="#b2b2b2" stroke-width="0.400"/></svg>
<svg class="abs" style="left:60.5px;top:586px" width="7" height="12" viewBox="0 0 7 12"><path d="M6.600 .4v11.200l-6-5.600z" fill="url(#pgg)" stroke="#b2b2b2" stroke-width="0.400"/></svg>
<svg class="abs" style="left:248.5px;top:586px" width="7" height="12" viewBox="0 0 7 12"><path d="M.4 .4v11.200l6-5.600z" fill="url(#pgg)" stroke="#b2b2b2" stroke-width="0.400"/></svg>
<svg class="abs" style="left:288px;top:586px" width="11" height="12" viewBox="0 0 11 12"><rect x="8.100" y="0.300" width="2.500" height="11.400" fill="url(#pgg)" stroke="#bdbdbd" stroke-width="0.400"/><path d="M.7 .4v11.200l6-5.600z" fill="url(#pgg)" stroke="#b2b2b2" stroke-width="0.400"/></svg>
<div class="abs" style="left:94px;top:586px;width:1px;height:13px;background:#8fb6ee"></div><div class="abs" style="left:95px;top:586px;width:1px;height:13px;background:#fafafa"></div>
<div class="abs" style="left:224px;top:586px;width:1px;height:13px;background:#8fb6ee"></div><div class="abs" style="left:225px;top:586px;width:1px;height:13px;background:#fafafa"></div>
<div class="abs" style="left:324px;top:586px;width:1px;height:13px;background:#8fb6ee"></div><div class="abs" style="left:325px;top:586px;width:1px;height:13px;background:#fafafa"></div>
<div class="abs" style="left:1118px;top:586px;width:1px;height:13px;background:#8fb6ee"></div><div class="abs" style="left:1119px;top:586px;width:1px;height:13px;background:#fafafa"></div>
<div class="t" style="left:107.8px;top:585px;transform:scaleX(0.8889);">Page</div>
<div class="abs" style="left:144.500px;top:583px;width:34.500px;height:18px;box-sizing:border-box;border:1px solid #5a5a5a;border-radius:2px;background:#fff"></div>
<div class="t" style="left:148.5px;top:586px;font-size:10px;">1</div>
<div class="t" style="left:189.5px;top:585px;transform:scaleX(0.9683);">of 1</div>
<div class="abs" style="left:337px;top:582.500px;width:40px;height:19px;box-sizing:border-box;border:1px solid #c4c4c4;background:#fff"></div>
<div class="t" style="left:341px;top:585px;transform:scaleX(0.9330);">20</div>
<div class="t" style="left:980px;top:585px;transform:scaleX(0.9663);">Displaying 1 - 12 of 12</div>
<div class="abs" style="left:0;top:613px;width:1123px;height:50px;background:#ececec"></div>
<div class="abs" style="left:0;top:663px;width:1123px;height:1px;background:#d4d4d4"></div>
<div class="abs" style="left:0;top:664px;width:1123px;height:1px;background:#c6c6c6"></div>
<div class="abs" style="left:0;top:665px;width:1123px;height:1px;background:#fbfbfb"></div>
<div class="grp" style="left:361px;top:617px;width:407px;height:41px"></div>
<svg class="abs" style="left:377px;top:628.8px" width="16" height="17" viewBox="0 0 16 17"><defs><linearGradient id="blr" x1="0" y1="0" x2="0" y2="1"><stop offset="0" stop-color="#72b4f0"/><stop offset="0.5" stop-color="#4a90d8"/><stop offset="1" stop-color="#2d6db6"/></linearGradient></defs><g stroke="#b4bcc0" stroke-width="1.500" stroke-linecap="round"><line x1="3.800" y1="13.600" x2="2.700" y2="15.300"/><line x1="12.300" y1="13.600" x2="13.400" y2="15.300"/></g><circle cx="8.050" cy="8" r="5.550" fill="#fff" stroke="url(#blr)" stroke-width="3"/><circle cx="8.050" cy="8" r="5.500" fill="none" stroke="#9cc6f2" stroke-width="0.700" opacity="0.800"/><g fill="#f3bb2a" stroke="#e2a514" stroke-width="0.400"><ellipse cx="3.100" cy="2.600" rx="2.800" ry="1.600" transform="rotate(-40 3.100 2.600)"/><ellipse cx="12.900" cy="2.600" rx="2.800" ry="1.600" transform="rotate(40 12.900 2.600)"/></g><path d="M7.200 5.800L7.800 9.200 10.600 6.500" fill="none" stroke="#5e5e5e" stroke-width="1.050" stroke-linecap="round" stroke-linejoin="round"/></svg>
<div class="t b" style="left:398px;top:630px;transform:scaleX(0.9650);">Triggers</div>
<div class="abs" style="left:462px;top:625px;width:155px;height:23.500px;box-sizing:border-box;background:#b5b5b5;border:1px solid #777;border-right-color:#fafafa;border-bottom-color:#fafafa"></div>
<svg class="abs" style="left:468px;top:630px" width="15" height="13" viewBox="0 0 15 13"><rect x="0.500" y="0.500" width="14" height="12" rx="0.800" fill="#fff" stroke="#6f98d8" stroke-width="1"/><rect x="1" y="1" width="13" height="2.400" fill="#8fb1e6"/><g fill="#4f86dc"><rect x="2" y="4.800" width="1.200" height="1.200"/><rect x="2" y="7.200" width="1.200" height="1.200"/><rect x="2" y="9.600" width="1.200" height="1.200"/></g><g stroke="#9a9a9a" stroke-width="1"><line x1="4.500" y1="5.400" x2="12.800" y2="5.400"/><line x1="4.500" y1="7.800" x2="12.800" y2="7.800"/><line x1="4.500" y1="10.200" x2="12.800" y2="10.200"/></g></svg>
<div class="t b" style="left:487.4px;top:630px;">Context parameters</div>
<svg class="abs" style="left:627.5px;top:627.2px" width="16" height="19" viewBox="0 0 16 19"><path d="M9.400 .4C11.400 3.600 4.400 5 7.200 9.800" fill="none" stroke="#e2463e" stroke-width="1.150" stroke-linecap="round"/><path d="M11 3.600C9 5 8.800 6.400 9.700 8" fill="none" stroke="#e2463e" stroke-width="0.800" stroke-linecap="round"/><g fill="none" stroke="#3d8fd0" stroke-width="1.150" stroke-linecap="round"><path d="M3.400 11.200c2.400.9 5.800.9 8 0"/><path d="M4.200 13.500c2 .7 4.700.7 6.500 0"/><path d="M12 11.300c2.500-.5 2.600 1.900-.5 2.700"/><path d="M1.400 15.500c3.400 1.400 9.200 1.400 12.600-.2"/><path d="M3 17.500c2.800.7 6.800.7 9.400 0"/></g></svg>
<div class="t b" style="left:650.3px;top:630px;transform:scaleX(0.9835);">JVM parameters</div>
<div class="abs" style="left:0;top:666px;width:1123px;height:38px;background:linear-gradient(#e6e6e6,#f0f0f0 24px)"></div>
<svg class="abs" style="left:15px;top:675.5px" width="17" height="18" viewBox="0 0 17 18"><defs><linearGradient id="cy15675" x1="0" x2="1"><stop offset="0" stop-color="#ffffff"/><stop offset="0.5" stop-color="#f4f4f4"/><stop offset="1" stop-color="#cfcfcf"/></linearGradient><linearGradient id="ga15675" x1="0" y1="0" x2="0" y2="1"><stop offset="0" stop-color="#4cad4c"/><stop offset="0.5" stop-color="#8fd88f"/><stop offset="1" stop-color="#3f9f3f"/></linearGradient><linearGradient id="gb15675" x1="0" y1="0" x2="0" y2="1"><stop offset="0" stop-color="#1f7d1f"/><stop offset="0.55" stop-color="#5cb85c"/><stop offset="1" stop-color="#1f7a1f"/></linearGradient></defs><path d="M.5 3.400v9c0 1.400 2.300 2.400 5.200 2.400s5.200-1 5.200-2.400v-9z" fill="url(#cy15675)" stroke="#bdbdbd" stroke-width="0.900"/><ellipse cx="5.700" cy="3.400" rx="5.200" ry="2.300" fill="#fcfcfc" stroke="#bdbdbd" stroke-width="0.900"/><path d="M5 9.400C5.400 6.600 8 5.100 11 5.100V2.800l4.400 3.600L11 10V7.900c-2.200 0-4.200.3-6 1.500z" fill="url(#ga15675)" stroke="#3f9a3f" stroke-width="0.500" stroke-linejoin="round"/><path d="M16.200 10.500c-.5 2.900-3 4.200-6.300 4.200V17l-4.200-3.600 4.200-3.600v2.200c2.400 0 4.700-.2 6.300-1.500z" fill="url(#gb15675)" stroke="#2a7f2a" stroke-width="0.500" stroke-linejoin="round"/></svg>
<div class="t" style="left:37px;top:677px;transform:scaleX(0.9378);">Refresh</div>
<svg class="abs" style="left:110px;top:677.5px" width="14" height="16" viewBox="0 0 14 16"><path d="M2.400 6.300A4.600 4.600 0 1 1 6.200 11.450" fill="none" stroke="#3f933a" stroke-width="3.400" stroke-linecap="butt"/><path d="M7.400 8.200L6.600 14.600 1.300 10.800z" fill="#3f933a" stroke="#3f933a" stroke-width="0.600" stroke-linejoin="round"/><path d="M2.400 6.300A4.600 4.600 0 1 1 6.200 11.450" fill="none" stroke="#86cf7e" stroke-width="2"/><path d="M6.700 9.200L6.200 13.400 2.700 10.900z" fill="#7cc874"/><path d="M3.600 6.800a3.400 3.400 0 0 1 3-3.300" fill="none" stroke="#b4e4ae" stroke-width="0.800"/><path d="M7 5.400a1.700 1.700 0 1 1-1.500 2.400" fill="none" stroke="#3f933a" stroke-width="1.300" stroke-linecap="round"/></svg>
<div class="t" style="left:130px;top:677px;transform:scaleX(0.9420);">Reset</div>
<svg class="abs" style="left:191.2px;top:675.7px" width="16" height="16" viewBox="0 0 16 16"><path d="M.6 1.600a1 1 0 0 1 1-1h12.800a1 1 0 0 1 1 1v12.800a1 1 0 0 1-1 1h-12.800a1 1 0 0 1-1-1z" fill="#a4c0ee" stroke="#7fa4e0" stroke-width="1"/><rect x="3.200" y="1" width="9.600" height="6.200" fill="#fdfdfd" stroke="#b6cbea" stroke-width="0.500"/><rect x="4.400" y="1.300" width="1.700" height="2.600" fill="#8aa3cc"/><rect x="3.600" y="9.400" width="8.800" height="5.800" fill="#fbfcf8" stroke="#b9cfa6" stroke-width="0.500"/><rect x="4.600" y="10.900" width="6.800" height="1.100" fill="#a9d68a"/><rect x="4.600" y="12.900" width="6.800" height="1.100" fill="#a9d68a"/></svg>
<div class="t g" style="left:212.5px;top:677px;transform:scaleX(0.8940);">Save</div>
<svg class="abs" style="left:269.8px;top:677px" width="15" height="15" viewBox="0 0 15 15"><defs><radialGradient id="cg" cx="0.400" cy="0.300" r="0.800"><stop offset="0" stop-color="#f79a98"/><stop offset="1" stop-color="#ee5f60"/></radialGradient></defs><path d="M4.800 .5h4.800l4.300 4.300v4.800l-4.300 4.300h-4.800l-4.300-4.300v-4.800z" fill="url(#cg)" stroke="#f08a8a" stroke-width="0.900" stroke-linejoin="round"/><path d="M4.700 4.700l5 5M9.700 4.700l-5 5" stroke="#fdeaea" stroke-width="2.100" stroke-linecap="round"/></svg>
<div class="t g" style="left:290px;top:677px;transform:scaleX(0.9637);">Cancel</div>
<svg class="abs" style="left:1096.6px;top:676px" width="16" height="16" viewBox="0 0 16 16"><defs><linearGradient id="grs" x1="0" y1="0" x2="0" y2="1"><stop offset="0" stop-color="#c2c2c2"/><stop offset="1" stop-color="#6e6e6e"/></linearGradient></defs><path d="M6.37 2.75L6.56 0.54L9.44 0.54L9.63 2.75L10.57 3.14L12.26 1.71L14.29 3.74L12.86 5.43L13.25 6.37L15.46 6.56L15.46 9.44L13.25 9.63L12.86 10.57L14.29 12.26L12.26 14.29L10.57 12.86L9.63 13.25L9.44 15.46L6.56 15.46L6.37 13.25L5.43 12.86L3.74 14.29L1.71 12.26L3.14 10.57L2.75 9.63L0.54 9.44L0.54 6.56L2.75 6.37L3.14 5.43L1.71 3.74L3.74 1.71L5.43 3.14z" fill="#d9d9d9" stroke="url(#grs)" stroke-width="0.900" stroke-linejoin="round"/><circle cx="8" cy="8" r="3.600" fill="none" stroke="#c4c4c4" stroke-width="0.700"/><circle cx="8" cy="8" r="2.100" fill="#f7f7f7" stroke="#a2a2a2" stroke-width="0.800"/></svg>
<div class="abs" style="left:0;top:704px;width:1123px;height:26px;background:#dfe2e7"></div>
<div class="abs" style="left:0;top:703px;width:1123px;height:1px;background:#fafafa"></div>
<div class="abs" style="left:1px;top:704px;width:1px;height:26px;background:#fbfbfb"></div>
<div class="abs" style="left:251px;top:704px;width:1px;height:26px;background:#fbfbfb"></div>
<div class="abs" style="left:331px;top:704px;width:1px;height:26px;background:#fbfbfb"></div>
<div class="abs" style="left:531px;top:704px;width:1px;height:26px;background:#fbfbfb"></div>
<div class="t" style="left:7.3px;top:710px;transform:scaleX(1.0151);">Context parameter</div>
<div class="t" style="left:257.3px;top:710px;transform:scaleX(1.0305);">Item type</div>
<div class="t" style="left:337.4px;top:710px;transform:scaleX(0.9952);">Custom value</div>
<div class="t" style="left:537.7px;top:710px;transform:scaleX(1.0126);">Original value</div>
<div class="abs" style="left:0;top:730px;width:1123px;height:101px;background:#fff"></div>
<div class="t" style="left:5px;top:736px;transform:scaleX(1.0133);">age_threshold</div>
<div class="t" style="left:255.5px;top:736px;">Integer</div>
<div class="t" style="left:5px;top:776px;transform:scaleX(0.9932);">dataset_size</div>
<div class="t" style="left:255.5px;top:776px;">Integer</div>
<svg class="abs" style="left:337px;top:743px" width="16" height="16" viewBox="0 0 16 16"><circle cx="8" cy="8" r="6.800" fill="#fffffa" stroke="#b9bc14" stroke-width="2.300"/><circle cx="8" cy="8" r="3" fill="#bcbf17"/></svg>
<div class="abs" style="left:358px;top:739px;width:168px;height:22px;box-sizing:border-box;border:1px solid #adb0c8;background:#fff"></div>
<div class="t" style="left:361.8px;top:743px;font-size:11px;letter-spacing:0.531px;transform:scaleX(1.0600);">"21"</div>
<svg class="abs" style="left:532.8px;top:740px" width="16" height="16" viewBox="0 0 16 16"><circle cx="8" cy="8" r="6.800" fill="#fffffa" stroke="#b9bc14" stroke-width="2.300"/></svg>
<div class="t" style="left:556.4px;top:740px;letter-spacing:-0.189px;transform:scaleX(0.8800);">21</div>
<svg class="abs" style="left:337px;top:783px" width="16" height="16" viewBox="0 0 16 16"><circle cx="8" cy="8" r="6.800" fill="#fffffa" stroke="#b9bc14" stroke-width="2.300"/><circle cx="8" cy="8" r="3" fill="#bcbf17"/></svg>
<div class="abs" style="left:358px;top:779px;width:168px;height:22px;box-sizing:border-box;border:1px solid #adb0c8;background:#fff"></div>
<div class="t" style="left:361.8px;top:783px;font-size:11px;letter-spacing:0.531px;transform:scaleX(1.0600);">"40"</div>
<svg class="abs" style="left:532.8px;top:780px" width="16" height="16" viewBox="0 0 16 16"><circle cx="8" cy="8" r="6.800" fill="#fffffa" stroke="#b9bc14" stroke-width="2.300"/></svg>
<div class="t" style="left:556.4px;top:780px;letter-spacing:-0.189px;transform:scaleX(0.8800);">10</div>
<div class="abs" style="left:319px;top:694px;width:216px;height:120px;box-sizing:border-box;border:4px solid #2d800a"></div>
<div class="abs" style="left:0;top:36px;width:10px;height:795px;background:linear-gradient(90deg,rgba(0,0,0,0.17),rgba(0,0,0,0.09) 30%,rgba(0,0,0,0.03) 65%,rgba(0,0,0,0))"></div>
</body>
</html>
